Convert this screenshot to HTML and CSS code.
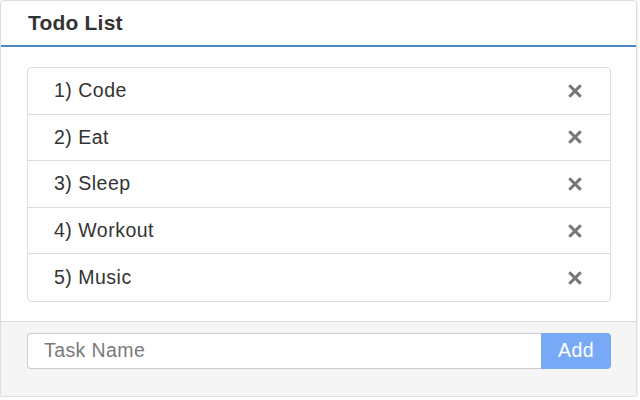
FILE: index.html
```html
<!DOCTYPE html>
<html>
<head>
<meta charset="utf-8">
<link rel="stylesheet" href="styles.css">
</head>
<body>
<div class="card">
  <div class="card-header"><h1 class="title">Todo List</h1></div>
  <div class="card-body">
    <ul class="list">
      <li class="item"><span>1) Code</span><svg class="x" viewBox="0 0 12 12"><path d="M2 2L10 10M10 2L2 10"/></svg></li>
      <li class="item"><span>2) Eat</span><svg class="x" viewBox="0 0 12 12"><path d="M2 2L10 10M10 2L2 10"/></svg></li>
      <li class="item"><span>3) Sleep</span><svg class="x" viewBox="0 0 12 12"><path d="M2 2L10 10M10 2L2 10"/></svg></li>
      <li class="item"><span>4) Workout</span><svg class="x" viewBox="0 0 12 12"><path d="M2 2L10 10M10 2L2 10"/></svg></li>
      <li class="item"><span>5) Music</span><svg class="x" viewBox="0 0 12 12"><path d="M2 2L10 10M10 2L2 10"/></svg></li>
    </ul>
  </div>
  <div class="card-footer">
    <div class="input-group">
      <input class="input" type="text" placeholder="Task Name">
      <button class="btn">Add</button>
    </div>
  </div>
</div>
</body>
</html>
```
FILE: styles.css
```css
* { box-sizing: border-box; }
html, body { margin: 0; padding: 0; background: #fff; }
body { font-family: "Liberation Sans", Arial, sans-serif; color: #333; }
.card {
  width: 637px;
  height: 397px;
  border: 1px solid #ddd;
  border-radius: 4px;
  box-shadow: 0 1px 2px rgba(0,0,0,0.2);
  display: flex;
  flex-direction: column;
  overflow: hidden;
}
.card-header {
  height: 46px;
  padding: 0 27px 1px;
  border-bottom: 2px solid #4a89c5;
  display: flex;
  align-items: center;
}
.title {
  margin: 0;
  font-size: 21px;
  font-weight: bold;
  color: #333;
  letter-spacing: 0.2px;
}
.card-body {
  padding: 20px 25px 19px 26px;
  flex: none;
}
.list {
  list-style: none;
  margin: 0;
  padding: 0;
  border: 1px solid #ddd;
  border-radius: 4px;
}
.item {
  height: 46.6px;
  display: flex;
  align-items: center;
  justify-content: space-between;
  padding: 0 28px 0 26px;
  font-size: 19.5px;
  color: #333;
  border-bottom: 1px solid #ddd;
  letter-spacing: 0.5px;
}
.item:last-child { border-bottom: none; }
.x {
  width: 14px;
  height: 14px;
  stroke: #777;
  stroke-width: 2.6;
  stroke-linecap: square;
  fill: none;
}
.card-footer {
  flex: 1;
  background: #f5f5f5;
  border-top: 1px solid #ddd;
  padding: 11px 25px 0 26px;
}
.input-group {
  display: flex;
  height: 36px;
}
.input {
  flex: 1;
  height: 36px;
  border: 1px solid #ccc;
  border-right: none;
  border-radius: 4px 0 0 4px;
  padding: 0 16px;
  font-family: "Liberation Sans", Arial, sans-serif;
  font-size: 19.5px;
  color: #333;
  background: #fff;
  outline: none;
  letter-spacing: 0.4px;
}
.input::placeholder { color: #7a7a7a; }
.btn {
  width: 70px;
  height: 36px;
  border: none;
  border-radius: 0 4px 4px 0;
  background: #78a9f6;
  color: #fff;
  font-family: "Liberation Sans", Arial, sans-serif;
  font-size: 19.5px;
  letter-spacing: 0.4px;
  padding: 0;
}
```
